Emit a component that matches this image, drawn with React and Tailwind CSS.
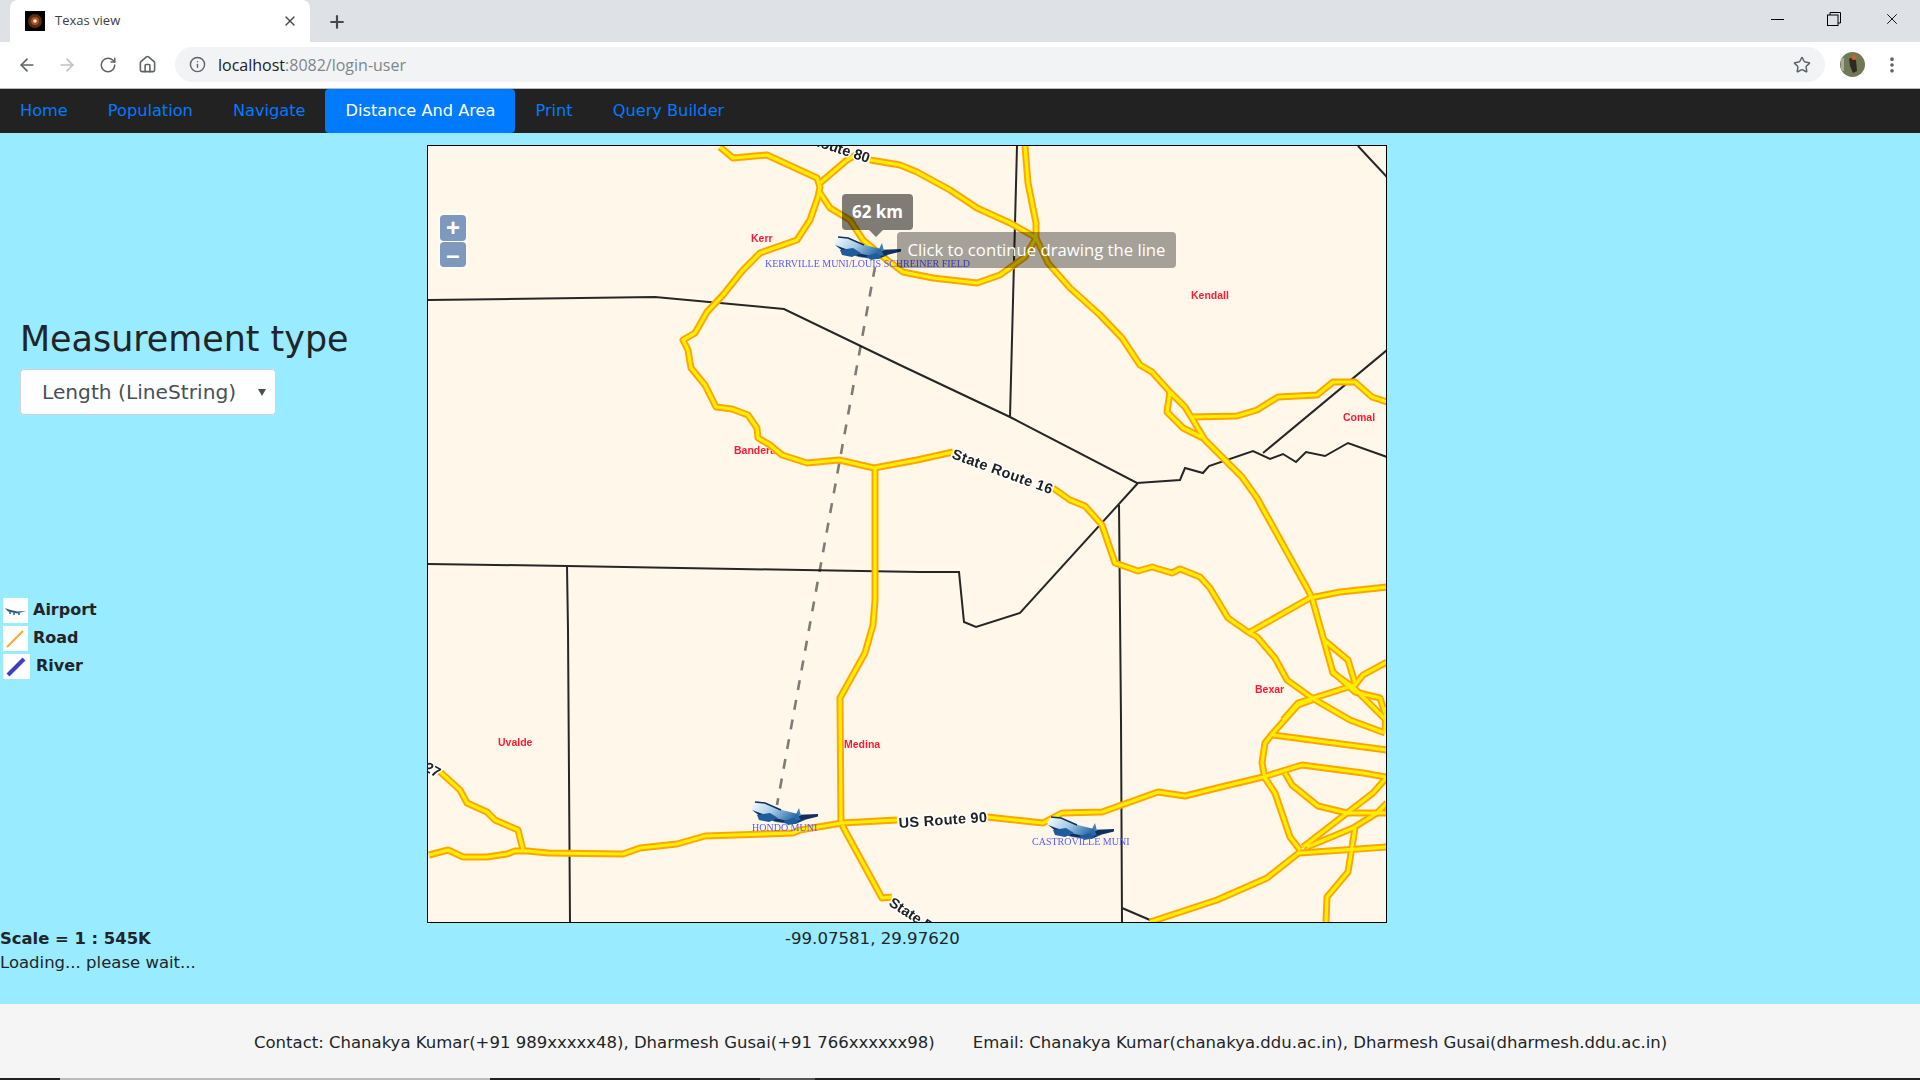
import React from "react";
import { ArrowLeft, ArrowRight, RotateCw, House, Info, Star, Plus, X, EllipsisVertical } from "lucide-react";

// everything on the map is in page pixels, the svg viewBox matches its spot on the page
const roads = [
  "720,147 733,158 767,155 817,178 820,187 818,197 810,220 797,240 760,253 743,270 723,295 707,312 695,333 683,340 688,350 691,368 705,385 716,407 732,409 748,415 757,428 758,438 770,445 782,455 807,463 839,460 874,468 917,460 953,452",
  "1053,488 1070,500 1085,506 1102,525 1115,563 1138,571 1152,567 1172,573 1180,569 1200,577 1210,588 1228,618 1248,632 1257,637 1275,658 1287,680 1312,698 1350,720 1385,733",
  "875,468 875,600 873,625 865,653 840,698 841,824",
  "429,855 448,850 463,857 487,857 507,854 515,851 527,851 548,853 623,854 640,848 677,844 705,836 793,833 800,830 842,823 897,820",
  "987,817 1043,823 1062,813 1102,812 1158,792 1185,796 1217,788 1263,777 1302,765 1363,773 1386,777",
  "842,825 882,898 892,897",
  "438,770 460,790 467,803 487,812 495,820 518,830 523,850",
  "820,183 847,160 856,155",
  "870,160 900,165 917,172 950,190 977,208 1010,223 1035,237 1037,240 1048,263 1070,288 1100,315 1122,338 1140,365 1152,372 1170,392 1185,407 1193,420 1205,440 1242,477 1257,498 1308,590 1312,598 1333,673 1353,687 1386,720",
  "1025,146 1028,183 1036,223 1036,238",
  "820,193 830,208 850,220 863,240 887,260 903,272 933,278 977,283 1000,275 1025,257 1036,238",
  "1170,392 1167,412 1183,428 1203,438",
  "1192,417 1237,416 1257,410 1278,397 1317,395 1333,382 1355,382 1372,397 1387,402",
  "1250,632 1310,598 1340,592 1387,587",
  "1324,640 1348,660 1355,683",
  "1333,672 1355,692 1380,698 1385,713",
  "1283,720 1298,703 1355,685 1363,675 1387,662",
  "1312,700 1298,705 1273,733 1265,743 1262,763 1265,778 1275,793 1290,837 1300,850",
  "1273,735 1387,750",
  "1285,773 1292,785 1318,806 1347,813 1387,813",
  "1387,777 1373,793 1347,813 1303,847",
  "1387,803 1377,813 1353,828 1307,847",
  "1300,853 1387,847",
  "1355,828 1348,872 1327,897 1326,922",
  "1300,852 1267,878 1217,900 1150,922",
  "1386,707 1385,733",
];

const borders = [
  "428,300 655,297 784,309 900,365 1010,417 1137,483 1180,480 1185,468 1203,473 1209,466 1253,451 1270,459 1283,454 1296,462 1306,452 1325,456 1348,443 1387,457",
  "1263,453 1387,350",
  "1358,146 1387,177",
  "1017,146 1010,417",
  "1138,483 1020,613 976,627 964,622 959,572 920,572 567,566 428,564",
  "567,566 568,630 570,922",
  "1119,505 1121,720 1122,922",
  "1122,908 1150,920",
];

const counties = [
  ["Kerr", 751, 242],
  ["Kendall", 1191, 299],
  ["Comal", 1343, 421],
  ["Bandera", 734, 454],
  ["Bexar", 1255, 693],
  ["Uvalde", 498, 746],
  ["Medina", 844, 748],
];

const airports = [
  { x: 835, y: 236, name: "KERRVILLE MUNI/LOUIS SCHREINER FIELD", lx: 765, ly: 267 },
  { x: 752, y: 801, name: "HONDO MUNI", lx: 752, ly: 831 },
  { x: 1048, y: 816, name: "CASTROVILLE MUNI", lx: 1032, ly: 845 },
];

const links = ["Home", "Population", "Navigate", "Distance And Area", "Print", "Query Builder"];

const Plane = ({ x, y }) => (
  <g transform={`translate(${x} ${y})`}>
    <path d="M44 14 L68 13 L68 15.5 L50 20 Z" fill="#10305f" />
    <path d="M45 15 L49 7 L51 15 Z" fill="#3f7fb5" />
    <path d="M1 7 L6 0 L16 2 L32 9 L48 13 L51 20 L40 23 L25 21 L8 15 Z" fill="url(#planeBody)" />
    <path d="M5 1 L15 2 L31 9" fill="none" stroke="#10305f" strokeWidth="1.4" />
    <path d="M2 9 L10 15 L26 20.5 L45 23 L55 19 L40 20.5 L27 17.5 L10 12 Z" fill="#10305f" />
    <path d="M7 14 L20 12 L28 17 L19 21 L9 19 Z" fill="#1f5c9c" />
    <path d="M33 20 L44 17 L49 22 L38 24 Z" fill="#1f5c9c" />
  </g>
);

const MapView = () => (
  <div className="relative h-[778px] w-[960px] overflow-hidden border border-black bg-[#fff7ea]">
    <svg viewBox="428 146 958 776" className="block h-full w-full blur-[0.4px]">
      <defs>
        <linearGradient id="planeBody" x1="0" y1="0" x2="1" y2="0.4">
          <stop offset="0" stopColor="#ffffff" />
          <stop offset="0.5" stopColor="#a8cdea" />
          <stop offset="1" stopColor="#2b6aa6" />
        </linearGradient>
      </defs>
      {borders.map((p, i) => (
        <polyline key={i} points={p} fill="none" stroke="#262626" strokeWidth="2" />
      ))}
      {counties.map(([name, x, y]) => (
        <text key={name} x={x} y={y} fill="#ff1a33" fontSize="10.5" fontWeight="700" fontFamily="'Liberation Sans', sans-serif">
          {name}
        </text>
      ))}
      {roads.map((p, i) => (
        <polyline key={i} points={p} fill="none" stroke="#ffa500" strokeWidth="7" strokeLinejoin="round" />
      ))}
      {roads.map((p, i) => (
        <polyline key={i} points={p} fill="none" stroke="#ffee00" strokeWidth="3.2" strokeLinejoin="round" />
      ))}
      <line x1="875" y1="267" x2="777" y2="805" stroke="#000" strokeOpacity="0.5" strokeWidth="2.6" strokeDasharray="10 10" />
      {airports.map((a) => (
        <g key={a.name}>
          <Plane x={a.x - 2} y={a.y} />
          <text x={a.lx} y={a.ly} fill="#5a5aff" fontSize="10" fontFamily="'Liberation Serif', serif">
            {a.name}
          </text>
        </g>
      ))}
      <g fill="#222" stroke="#fff" strokeWidth="3" fontSize="14.5" fontWeight="700" fontFamily="'Liberation Sans', sans-serif" style={{ paintOrder: "stroke" }}>
        <text transform="translate(868 163) rotate(18)" textAnchor="end">Route 80</text>
        <text transform="translate(951 458) rotate(20)" letterSpacing="0.4">State Route 16</text>
        <text transform="translate(899 828) rotate(-4)" letterSpacing="0.3">US Route 90</text>
        <text transform="translate(888 905) rotate(33)">State Route</text>
        <text transform="translate(437 778) rotate(30)" textAnchor="end">227</text>
      </g>
    </svg>

    {/* zoom buttons */}
    <div className="absolute left-[10px] top-[67px] flex flex-col gap-px rounded bg-white/40 p-0.5">
      <div className="flex h-[26px] w-[26px] items-center justify-center rounded-sm bg-[#7f99bc] font-['Liberation_Sans',sans-serif] text-[24px] font-bold leading-none text-white">+</div>
      <div className="flex h-[25px] w-[26px] items-center justify-center rounded-sm bg-[#7f99bc] font-['Liberation_Sans',sans-serif] text-[24px] font-bold leading-none text-white">–</div>
    </div>

    {/* measure tooltips */}
    <div className="absolute left-[414px] top-[48px] flex h-[36px] w-[71px] items-center justify-center rounded bg-black/50 font-['Open_Sans',sans-serif] text-[17px] font-bold text-white">
      62 km
      <span className="absolute left-[27px] top-[36px] h-0 w-0 border-x-[7px] border-t-[7px] border-x-transparent border-t-black/50" />
    </div>
    <div className="absolute left-[469px] top-[86px] flex h-[36px] w-[279px] items-center justify-center rounded bg-black/35 font-['Open_Sans',sans-serif] text-[16.7px] text-white">
      Click to continue drawing the line
    </div>
  </div>
);

const LegendIcon = ({ children, wide }) => (
  <svg viewBox="0 0 25 25" className={`h-[25px] bg-white ${wide ? "w-[27px]" : "w-[25px]"}`}>
    {children}
  </svg>
);

const App = () => {
  return (
    <div className="flex h-[1080px] w-[1920px] flex-col overflow-hidden bg-[#99ebff] font-['DejaVu_Sans',sans-serif] text-[16.5px] text-[#212529]">
      {/* tab strip */}
      <div className="flex h-[42px] items-end bg-[#dee1e6]">
        <div className="ml-[10px] flex h-[42px] w-[300px] items-center rounded-t-lg bg-white pl-[15px] pr-3">
          <svg viewBox="0 0 20 20" className="h-5 w-5">
            <rect width="20" height="20" fill="#000" />
            <circle cx="10" cy="10" r="7" fill="#5a2c10" />
            <circle cx="10" cy="10" r="4" fill="#b0511d" />
            <circle cx="10" cy="10" r="1.8" fill="#eee" />
          </svg>
          <span className="ml-[10px] flex-1 font-['Open_Sans',sans-serif] text-[13px] text-[#3c4043]">Texas view</span>
          <X size={16} strokeWidth={2} className="text-[#45484c]" />
        </div>
        <Plus size={20} strokeWidth={2.6} className="mb-[10px] ml-[17px] text-[#45484c]" />
        <div className="mb-[14px] ml-auto flex items-center">
          <div className="h-px w-[13px] bg-black" />
          <svg viewBox="0 0 14 14" className="ml-[43px] h-[14px] w-[14px]" fill="none" stroke="#000">
            <rect x="0.5" y="3" width="10.5" height="10.5" />
            <path d="M3 3 V0.5 H13.5 V11 H11" />
          </svg>
          <X size={18} strokeWidth={1.2} className="ml-[42px] mr-[19px] text-black" />
        </div>
      </div>

      {/* toolbar */}
      <div className="flex h-[47px] items-center border-b border-[#bbb] bg-white pb-[1px] text-[#5f6368]">
        <ArrowLeft size={20} strokeWidth={2} className="ml-[17px]" />
        <ArrowRight size={20} strokeWidth={2} className="ml-[20px] text-[#bdc1c6]" />
        <RotateCw size={18} strokeWidth={2} className="ml-[22px]" />
        <House size={19} strokeWidth={2} className="ml-[21px]" />
        <div className="ml-[18px] flex h-[35px] w-[1650px] items-center rounded-full bg-[#f1f3f4] pl-[14px] pr-[14px]">
          <Info size={17} strokeWidth={2} />
          <span className="ml-[12px] font-['Open_Sans',sans-serif] text-[16px] text-[#202124]">
            localhost<span className="text-[#80868b]">:8082/login-user</span>
          </span>
          <Star size={18} strokeWidth={2} className="ml-auto" />
        </div>
        <svg viewBox="0 0 25 25" className="ml-[15px] h-[25px] w-[25px]">
          <circle cx="12.5" cy="12.5" r="12.5" fill="#6f7a55" />
          <path d="M9 7 L13 5 L16 8 L17 19 L13 21 L10 14 Z" fill="#2d2a26" />
          <circle cx="14" cy="5.5" r="2.5" fill="#c8642a" />
          <rect x="1" y="6" width="3" height="13" fill="#a9a9a0" />
        </svg>
        <EllipsisVertical size={20} strokeWidth={2.4} className="ml-[17px]" />
      </div>

      {/* nav */}
      <nav className="flex h-[44px] items-center bg-[#222222] text-[16.2px] text-[#007bff]">
        {links.map((l) => (
          <a
            key={l}
            className={`flex h-[44px] items-center px-[20px] pt-[1px] ${l === "Distance And Area" ? "rounded bg-[#007bff] text-white" : ""}`}
          >
            {l}
          </a>
        ))}
      </nav>

      {/* page */}
      <div className="flex h-[871px]">
        <div className="flex w-[427px] flex-col">
          <h2 className="ml-[20px] mt-[186px] text-[34.9px] leading-[40px]">Measurement type</h2>
          <div className="relative ml-[20px] mt-[10px] flex h-[46px] w-[256px] items-center rounded border border-[#ced4da] bg-white pl-[21px] pt-[1px] text-[20.2px] text-[#495057]">
            Length (LineString)
            <span className="absolute left-[237px] top-[19px] h-0 w-0 border-x-[4px] border-t-[7px] border-x-transparent border-t-[#495057]" />
          </div>
          <div className="ml-[3px] mt-[183px] flex flex-col gap-[3px] text-[16px] font-bold">
            <div className="flex items-center gap-[5px]">
              <LegendIcon>
                <path d="M2 10 L6 11.5 L14 13.5 L23 13 L14 15.5 L5 13.5 Z" fill="#2b5a8a" />
                <path d="M6 15 h2 M10 16 h2 M15 16 h2" stroke="#2b5a8a" strokeWidth="1.4" />
              </LegendIcon>
              <span className="-mt-[2px]">Airport</span>
            </div>
            <div className="flex items-center gap-[5px]">
              <LegendIcon>
                <line x1="4" y1="21" x2="20" y2="5" stroke="#ffa726" strokeWidth="2" />
              </LegendIcon>
              <span className="-mt-[2px]">Road</span>
            </div>
            <div className="flex items-center gap-[6px]">
              <LegendIcon wide>
                <line x1="4" y1="21" x2="20" y2="5" stroke="#3f3fc4" strokeWidth="4" />
              </LegendIcon>
              <span className="-mt-[2px]">River</span>
            </div>
          </div>
          <div className="mt-[248px] text-[16.4px] font-bold leading-[24px]">Scale = 1 : 545K</div>
          <div className="leading-[24px]">Loading... please wait...</div>
        </div>
        <div className="flex flex-col pt-[12px]">
          <MapView />
          <div className="ml-[358px] mt-[4px] text-[16.6px] leading-[24px]">-99.07581, 29.97620</div>
        </div>
      </div>

      {/* footer */}
      <footer className="flex h-[74px] items-center gap-[38px] bg-[#f5f5f5] pl-[254px] pt-[4px]">
        <span>Contact: Chanakya Kumar(+91 989xxxxx48), Dharmesh Gusai(+91 766xxxxxx98)</span>
        <span>Email: Chanakya Kumar(chanakya.ddu.ac.in), Dharmesh Gusai(dharmesh.ddu.ac.in)</span>
      </footer>
      <div className="flex h-[2px] bg-[#222]">
        <div className="w-[60px]" />
        <div className="w-[430px] bg-[#bbb]" />
        <div className="w-[270px]" />
        <div className="w-[55px] bg-[#555]" />
      </div>
    </div>
  );
};

export default App;
